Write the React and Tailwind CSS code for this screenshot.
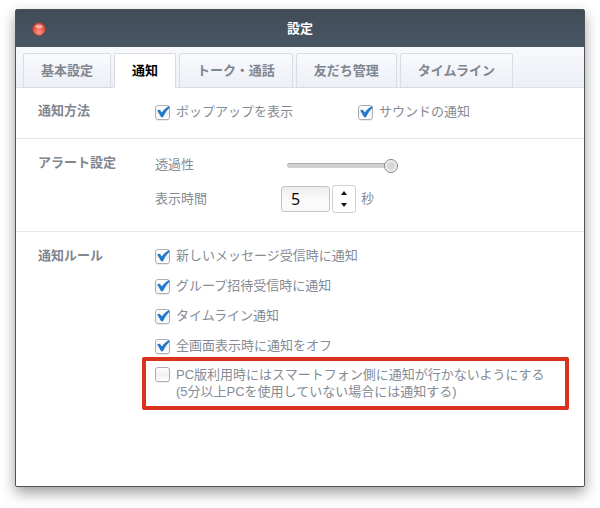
import { useState } from "react";

const tabs = ["基本設定", "通知", "トーク・通話", "友だち管理", "タイムライン"];

const initialRules = [
  { id: "message", text: "新しいメッセージ受信時に通知", on: true },
  { id: "group", text: "グループ招待受信時に通知", on: true },
  { id: "timeline", text: "タイムライン通知", on: true },
  { id: "fullscreen", text: "全画面表示時に通知をオフ", on: true },
];

const Check = ({ id, checked, onChange }) => (
  <span className="relative block size-[15px] shrink-0">
    <input
      id={id}
      type="checkbox"
      checked={checked}
      onChange={onChange}
      className="block size-[15px] appearance-none rounded-[3px] border border-[#abaeb3] bg-linear-to-b from-white via-[#f1f1f3] to-white shadow-[0_1px_1px_rgba(0,0,0,0.08)]"
    />
    {checked && (
      <svg viewBox="0 0 15 15" className="pointer-events-none absolute inset-0 size-[15px]">
        <path
          d="M2.2 5.6C3.2 4.5 4.7 4.5 5.4 5.5L6.8 7.4C8.6 4.9 10.6 2.9 13.2 1.4C14.4 0.9 15.1 2 14.3 2.9C11.7 5.4 9.8 8.3 8.4 11.5C7.8 12.7 6.2 12.7 5.6 11.6C4.6 9.6 3.6 7.7 2.2 5.6Z"
          fill="#2179c9"
        />
      </svg>
    )}
  </span>
);

const CheckRow = ({ id, text, checked, onChange }) => (
  <div className="flex h-5 items-center gap-[6px]">
    <Check id={id} checked={checked} onChange={onChange} />
    <label htmlFor={id}>{text}</label>
  </div>
);

const Section = ({ title, className = "", children }) => (
  <section className={`flex pl-[22px] ${className}`}>
    <h2 className="w-[117px] shrink-0 font-bold leading-5 text-[#7f868f]">{title}</h2>
    <div className="min-w-0 flex-1">{children}</div>
  </section>
);

const App = () => {
  const [tab, setTab] = useState("通知");
  const [popup, setPopup] = useState(true);
  const [sound, setSound] = useState(true);
  const [opacity, setOpacity] = useState(100);
  const [seconds, setSeconds] = useState(5);
  const [rules, setRules] = useState(initialRules);
  const [pcOnly, setPcOnly] = useState(false);

  const toggleRule = (id) => {
    setRules(rules.map((r) => (r.id === id ? { ...r, on: !r.on } : r)));
  };

  return (
    <div className="flex min-h-screen flex-col bg-white px-[15px] pt-[9px] pb-[21px] font-['Liberation_Sans','Noto_Sans_CJK_JP',sans-serif] text-[13px] text-[#858b94]">
      <main className="flex flex-1 flex-col rounded-[2px] border border-[#4e5459] bg-white shadow-[0_6px_14px_rgba(0,0,0,0.38)]">
        <header className="grid h-[37px] grid-cols-[1fr_auto_1fr] items-center bg-linear-to-b from-[#414c58] to-[#495664] px-4">
          <button aria-label="閉じる" className="size-[14px]">
            <svg viewBox="0 0 14 14" className="size-[14px]">
              <defs>
                <radialGradient id="red" cx="0.5" cy="0.75" r="0.7">
                  <stop offset="0" stopColor="#ff9c86" />
                  <stop offset="0.6" stopColor="#ea5546" />
                  <stop offset="1" stopColor="#c9463c" />
                </radialGradient>
              </defs>
              <circle cx="7" cy="7" r="6.5" fill="url(#red)" stroke="#8f3936" strokeWidth="0.6" />
              <ellipse cx="7" cy="4.6" rx="3.6" ry="2" fill="#ffd9d2" opacity="0.65" />
            </svg>
          </button>
          <h1 className="font-bold text-white">設定</h1>
        </header>

        <nav className="flex h-[41px] items-end gap-[3px] border-b border-[#dcdfe6] bg-linear-to-b from-[#f8f9fc] to-[#eceff6] pl-[7px]">
          {tabs.map((t) => (
            <button
              key={t}
              onClick={() => setTab(t)}
              className={`-mb-px h-[35px] rounded-t-[2px] border border-[#d9dce3] px-[17px] font-bold whitespace-nowrap ${
                t === tab
                  ? "border-b-white bg-white text-black"
                  : "bg-linear-to-b from-[#f9fafd] to-[#eceff6] text-[#7f868f]"
              }`}
            >
              {t}
            </button>
          ))}
        </nav>

        <Section title="通知方法" className="border-b border-[#e6e7ea] pt-[13px] pb-4">
          <div className="grid grid-cols-[203px_1fr] pt-px">
            <CheckRow id="popup" text="ポップアップを表示" checked={popup} onChange={() => setPopup(!popup)} />
            <CheckRow id="sound" text="サウンドの通知" checked={sound} onChange={() => setSound(!sound)} />
          </div>
        </Section>

        <Section title="アラート設定" className="border-b border-[#e6e7ea] pt-[14px] pb-[18px]">
          <div className="grid grid-cols-[126px_1fr] items-center gap-y-2">
            <label htmlFor="opacity">透過性</label>
            <div className="flex h-6 items-center pl-[6px]">
              <input
                id="opacity"
                type="range"
                value={opacity}
                onChange={(e) => setOpacity(Number(e.target.value))}
                className="h-[5px] w-[111px] appearance-none rounded-full border-t border-[#ababab] bg-[#d0d0d0] [&::-webkit-slider-thumb]:size-[14px] [&::-webkit-slider-thumb]:appearance-none [&::-webkit-slider-thumb]:rounded-full [&::-webkit-slider-thumb]:border [&::-webkit-slider-thumb]:border-[#858585] [&::-webkit-slider-thumb]:bg-[radial-gradient(circle,#d6d6d6_35%,#fafafa_75%)]"
              />
            </div>
            <label htmlFor="seconds">表示時間</label>
            <div className="flex h-7 items-center">
              <input
                id="seconds"
                type="text"
                inputMode="numeric"
                value={seconds}
                onChange={(e) => setSeconds(Number(e.target.value) || 0)}
                className="h-[26px] w-[49px] rounded-[3px] border border-[#c4c4c4] bg-linear-to-b from-[#ececec] via-[#fafafa] to-[#fafafa] pl-[9px] font-['Open_Sans',sans-serif] text-base font-medium text-black"
              />
              <div className="ml-[2px] flex h-7 w-6 flex-col rounded-[3px] border border-[#d0d0d0] bg-white py-px">
                <button
                  aria-label="増やす"
                  onClick={() => setSeconds(seconds + 1)}
                  className="flex flex-1 items-center justify-center"
                >
                  <svg viewBox="0 0 6 4" className="h-1 w-[6px]">
                    <path d="M3 0L6 4H0Z" fill="#111" />
                  </svg>
                </button>
                <button
                  aria-label="減らす"
                  onClick={() => setSeconds(Math.max(0, seconds - 1))}
                  className="flex flex-1 items-center justify-center"
                >
                  <svg viewBox="0 0 6 4" className="h-1 w-[6px]">
                    <path d="M0 0H6L3 4Z" fill="#111" />
                  </svg>
                </button>
              </div>
              <span className="ml-[5px]">秒</span>
            </div>
          </div>
        </Section>

        <Section title="通知ルール" className="pt-[14px]">
          <div className="flex flex-col gap-[10px]">
            {rules.map((r) => (
              <CheckRow key={r.id} id={r.id} text={r.text} checked={r.on} onChange={() => toggleRule(r.id)} />
            ))}
          </div>
          {/* highlighted option */}
          <div className="mt-px mr-[15px] -ml-[13px] flex gap-[6px] rounded-[2px] border-4 border-[#d9331c] px-[9px] pt-[5px] pb-[6px] leading-[17px]">
            <div className="pt-px">
              <Check id="pc" checked={pcOnly} onChange={() => setPcOnly(!pcOnly)} />
            </div>
            <label htmlFor="pc">
              PC版利用時にはスマートフォン側に通知が行かないようにする
              <br />
              (5分以上PCを使用していない場合には通知する)
            </label>
          </div>
        </Section>
      </main>
    </div>
  );
};

export default App;
